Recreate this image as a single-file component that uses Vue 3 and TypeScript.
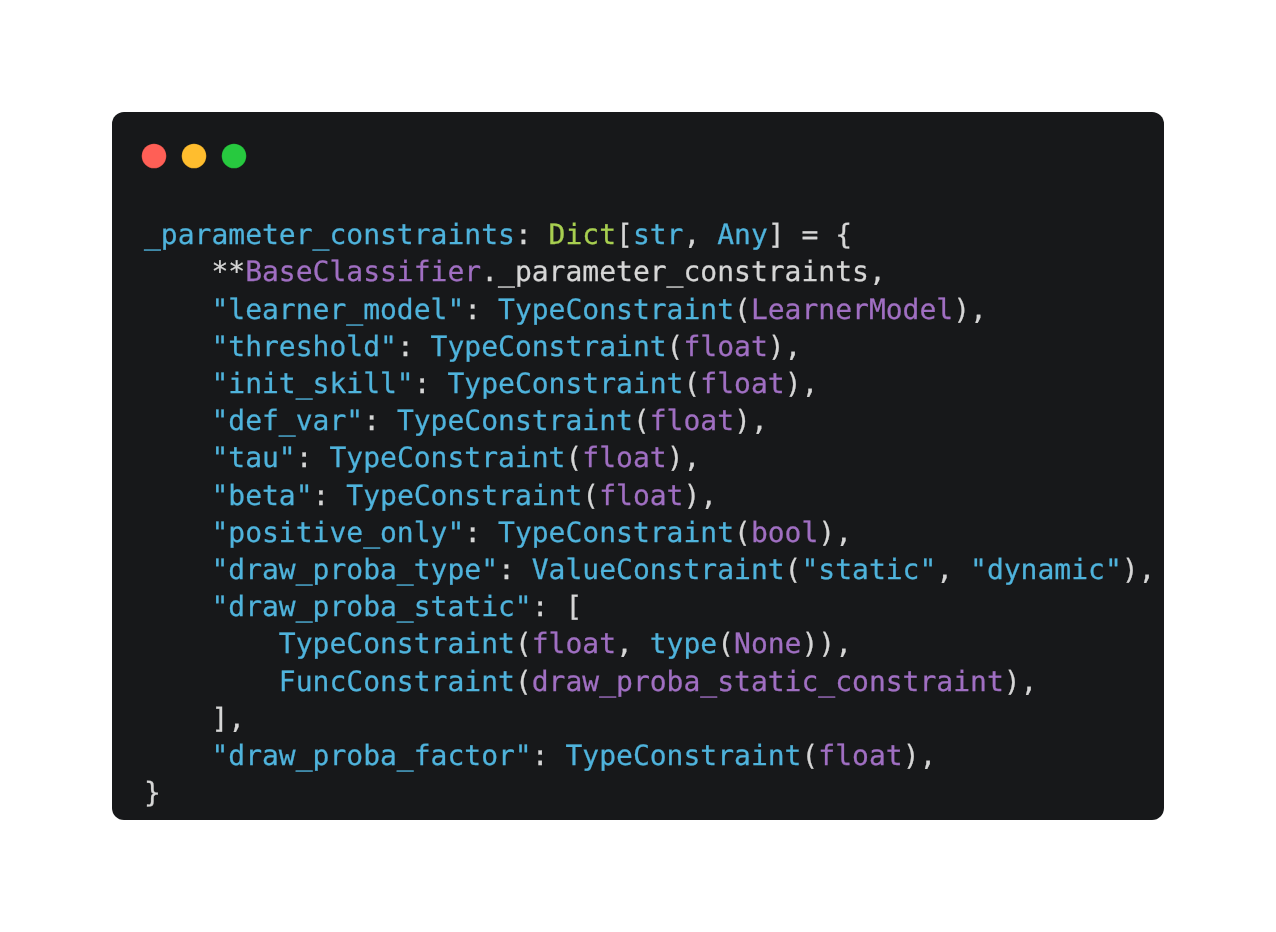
<script setup lang="ts">
type Kind = 'b' | 'p' | 'g' | 't'
type Token = [string, Kind]
const lines: Token[][] = [
  [['_parameter_constraints', 'b'], [': ', 't'], ['Dict', 'g'], ['[', 't'], ['str', 'b'], [', ', 't'], ['Any', 'b'], ['] = {', 't']],
  [['    **', 't'], ['BaseClassifier', 'p'], ['._parameter_constraints,', 't']],
  [['    ', 't'], ['"learner_model"', 'b'], [': ', 't'], ['TypeConstraint', 'b'], ['(', 't'], ['LearnerModel', 'p'], ['),', 't']],
  [['    ', 't'], ['"threshold"', 'b'], [': ', 't'], ['TypeConstraint', 'b'], ['(', 't'], ['float', 'p'], ['),', 't']],
  [['    ', 't'], ['"init_skill"', 'b'], [': ', 't'], ['TypeConstraint', 'b'], ['(', 't'], ['float', 'p'], ['),', 't']],
  [['    ', 't'], ['"def_var"', 'b'], [': ', 't'], ['TypeConstraint', 'b'], ['(', 't'], ['float', 'p'], ['),', 't']],
  [['    ', 't'], ['"tau"', 'b'], [': ', 't'], ['TypeConstraint', 'b'], ['(', 't'], ['float', 'p'], ['),', 't']],
  [['    ', 't'], ['"beta"', 'b'], [': ', 't'], ['TypeConstraint', 'b'], ['(', 't'], ['float', 'p'], ['),', 't']],
  [['    ', 't'], ['"positive_only"', 'b'], [': ', 't'], ['TypeConstraint', 'b'], ['(', 't'], ['bool', 'p'], ['),', 't']],
  [['    ', 't'], ['"draw_proba_type"', 'b'], [': ', 't'], ['ValueConstraint', 'b'], ['(', 't'], ['"static"', 'b'], [', ', 't'], ['"dynamic"', 'b'], ['),', 't']],
  [['    ', 't'], ['"draw_proba_static"', 'b'], [': [', 't']],
  [['        ', 't'], ['TypeConstraint', 'b'], ['(', 't'], ['float', 'p'], [', ', 't'], ['type', 'b'], ['(', 't'], ['None', 'p'], [')),', 't']],
  [['        ', 't'], ['FuncConstraint', 'b'], ['(', 't'], ['draw_proba_static_constraint', 'p'], ['),', 't']],
  [['    ],', 't']],
  [['    ', 't'], ['"draw_proba_factor"', 'b'], [': ', 't'], ['TypeConstraint', 'b'], ['(', 't'], ['float', 'p'], ['),', 't']],
  [['}', 't']],
]
const dots = [
  { cx: 13, fill: '#ff5f56' },
  { cx: 53, fill: '#ffbd2e' },
  { cx: 93, fill: '#27c93f' },
]
</script>

<template>
  <main class="page">
    <section class="window">
      <svg class="dots" width="106" height="26" viewBox="0 0 106 26" aria-hidden="true">
        <circle v-for="d in dots" :key="d.cx" :cx="d.cx" cy="13" r="12.3" :fill="d.fill" stroke="#000" stroke-opacity="0.12" stroke-width="0.8" />
      </svg>
      <pre class="code"><code><span v-for="(line, i) in lines" :key="i" class="line"><span v-for="(tok, j) in line" :key="j" :class="tok[1]">{{ tok[0] }}</span></span></code></pre>
    </section>
  </main>
</template>

<style>
html, body { margin: 0; background: #ffffff; }
</style>

<style scoped>
.page {
  box-sizing: border-box;
  width: 1276px;
  height: 932px;
  padding: 112px;
  background: #ffffff;
}
.window {
  box-sizing: border-box;
  width: 1052px;
  height: 708px;
  background: #17181a;
  border-radius: 12px;
  padding: 31px 0 0 29px;
}
.dots {
  display: block;
}
.code {
  margin: 47px 0 0 3.3px;
  padding-top: 0.3px;
  font-family: "DejaVu Sans Mono", monospace;
  font-size: 28px;
  line-height: 37.2px;
  white-space: pre;
  text-rendering: geometricPrecision;
  will-change: transform;
  -webkit-text-stroke: 0.25px currentColor;
}
.code code { font-family: inherit; display: block; }
.line { display: block; height: 37.2px; }
.b { color: #4fb3dc; }
.p { color: #a06fc2; }
.g { color: #a8cf50; }
.t { color: #d6d6d6; }
</style>
